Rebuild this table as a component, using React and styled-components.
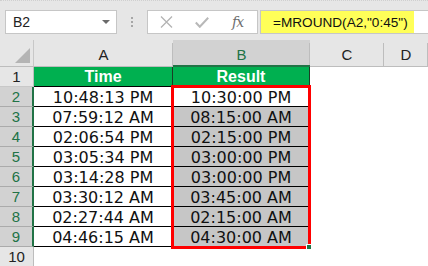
import React from "react";
import styled, { createGlobalStyle } from "styled-components";

const GlobalStyle = createGlobalStyle`
  html, body { margin: 0; padding: 0; background: #ffffff; overflow: hidden; }
  #root { width: 428px; height: 266px; }
`;

const Page = styled.div`
  position: relative;
  width: 428px;
  height: 266px;
  overflow: hidden;
  background: #ffffff;
  font-family: "Liberation Sans", Arial, sans-serif;
`;

const FormulaBar = styled.div`
  display: flex;
  align-items: stretch;
  height: 40px;
  box-sizing: border-box;
  padding: 9px 0 6px 5px;
  background: #e6e6e6;
  border-top: 1px dotted #cfcfcf;
`;

const NameBox = styled.div`
  width: 112px;
  box-sizing: border-box;
  display: flex;
  align-items: center;
  justify-content: space-between;
  padding: 0 6px 0 7px;
  background: #ffffff;
  border: 1px solid #c6c6c6;
  font-size: 14px;
  color: #222;
`;

const DropArrow = styled.span`
  width: 0;
  height: 0;
  border-left: 4px solid transparent;
  border-right: 4px solid transparent;
  border-top: 4px solid #6a6a6a;
`;

const Grip = styled.div`
  width: 30px;
  display: flex;
  flex-direction: column;
  align-items: center;
  justify-content: center;
  gap: 2px;
`;

const GripDot = styled.span`
  width: 2px;
  height: 2px;
  background: #a6a6a6;
`;

const FuncBox = styled.div`
  width: 111px;
  box-sizing: border-box;
  display: flex;
  align-items: center;
  padding-left: 12px;
  gap: 22px;
  background: #ffffff;
  border: 1px solid #c6c6c6;
`;

const Fx = styled.span`
  font-family: "DejaVu Serif", "Liberation Serif", serif;
  font-style: italic;
  font-size: 14px;
  color: #6e6e6e;
  margin-left: 1px;
  letter-spacing: -1px;
`;

const FormulaInput = styled.div`
  flex: 1;
  margin-left: 2px;
  display: flex;
  align-items: stretch;
  background: #ffffff;
  border-top: 1px solid #c6c6c6;
  border-bottom: 1px solid #c6c6c6;
  border-left: 1px solid #c6c6c6;
`;

const Highlight = styled.div`
  width: 153px;
  display: flex;
  align-items: center;
  padding-left: 12px;
  box-sizing: border-box;
  background: #ffff58;
  font-size: 13.6px;
  color: #111;
  white-space: nowrap;
`;

const Sheet = styled.div`
  display: grid;
  grid-template-columns: 34px 139px 137px 74px 44px;
  grid-template-rows: 27px repeat(10, 20px);
`;

const Corner = styled.div`
  position: relative;
  background: #e6e6e6;
  border-right: 1px solid #c8c8c8;
  border-bottom: 1px solid #bdbdbd;
  box-sizing: border-box;
  &::after {
    content: "";
    position: absolute;
    right: 3px;
    bottom: 3px;
    width: 0;
    height: 0;
    border-left: 15px solid transparent;
    border-bottom: 15px solid #b4b4b4;
  }
`;

const ColHeader = styled.div`
  position: relative;
  box-sizing: border-box;
  background: ${(p) => (p.$selected ? "#d2d2d2" : "#e6e6e6")};
  border-bottom: ${(p) => (p.$selected ? "2px solid #217346" : "1px solid #bdbdbd")};
  color: ${(p) => (p.$selected ? "#217346" : "#222")};
  font-size: 15px;
  text-align: center;
  padding-top: 4px;
  line-height: 22px;
  &::after {
    content: "";
    position: absolute;
    right: 0;
    top: 3px;
    bottom: 0;
    width: 1px;
    background: #bdbdbd;
  }
`;

const RowHeader = styled.div`
  box-sizing: border-box;
  background: ${(p) => (p.$selected ? "#d2d2d2" : "#e6e6e6")};
  border-bottom: 1px solid ${(p) => (p.$selected ? "#ababab" : "#c8c8c8")};
  border-right: ${(p) => (p.$selected ? "2px solid #217346" : "1px solid #bdbdbd")};
  color: ${(p) => (p.$selected ? "#217346" : "#222")};
  font-size: 15px;
  text-align: center;
  line-height: 20px;
`;

const TitleCell = styled.div`
  box-sizing: border-box;
  background: #00b050;
  border-right: 1px solid #1c3d25;
  border-bottom: 1px solid #000;
  color: #ffffff;
  font-weight: bold;
  font-size: 16px;
  text-align: center;
  line-height: 20px;
`;

const DataCell = styled.div`
  box-sizing: border-box;
  background: ${(p) => (p.$shaded ? "#c6c6c6" : "#ffffff")};
  border-right: 1px solid #000;
  border-bottom: 1px solid #000;
  font-family: "DejaVu Sans", Verdana, sans-serif;
  font-size: 16px;
  color: #111;
  text-align: center;
  line-height: 19px;
  padding-top: 1px;
  white-space: nowrap;
`;

const EmptyCell = styled.div`
  background: #ffffff;
`;

const Selection = styled.div`
  position: absolute;
  left: 171px;
  top: 85px;
  width: 140px;
  height: 164px;
  box-sizing: border-box;
  border: 3px solid #ff0000;
  pointer-events: none;
`;

const FillHandle = styled.div`
  position: absolute;
  left: 306px;
  top: 244px;
  width: 4px;
  height: 4px;
  background: #217346;
  border-left: 1px solid #fff;
  border-top: 1px solid #fff;
`;

const times = [
  "10:48:13 PM",
  "07:59:12 AM",
  "02:06:54 PM",
  "03:05:34 PM",
  "03:14:28 PM",
  "03:30:12 AM",
  "02:27:44 AM",
  "04:46:15 AM",
];

const results = [
  "10:30:00 PM",
  "08:15:00 AM",
  "02:15:00 PM",
  "03:00:00 PM",
  "03:00:00 PM",
  "03:45:00 AM",
  "02:15:00 AM",
  "04:30:00 AM",
];

const XIcon = () => (
  <svg width="13" height="12" viewBox="0 0 13 12">
    <path d="M1 0.5 L12 11.5 M12 0.5 L1 11.5" stroke="#b3b3b3" strokeWidth="1.3" fill="none" />
  </svg>
);

const CheckIcon = () => (
  <svg width="14" height="11" viewBox="0 0 14 11">
    <path d="M0.8 5.5 L4.8 9.8 L13.2 0.8" stroke="#b8b8b8" strokeWidth="2" fill="none" />
  </svg>
);

export default function App() {
  return (
    <Page>
      <GlobalStyle />
      <FormulaBar>
        <NameBox>
          <span>B2</span>
          <DropArrow />
        </NameBox>
        <Grip>
          <GripDot />
          <GripDot />
          <GripDot />
        </Grip>
        <FuncBox>
          <XIcon />
          <CheckIcon />
          <Fx>fx</Fx>
        </FuncBox>
        <FormulaInput>
          <Highlight>=MROUND(A2,"0:45")</Highlight>
        </FormulaInput>
      </FormulaBar>
      <Sheet>
        <Corner />
        <ColHeader>A</ColHeader>
        <ColHeader $selected>B</ColHeader>
        <ColHeader>C</ColHeader>
        <ColHeader>D</ColHeader>

        <RowHeader>1</RowHeader>
        <TitleCell>Time</TitleCell>
        <TitleCell>Result</TitleCell>
        <EmptyCell />
        <EmptyCell />

        {times.map((t, i) => (
          <React.Fragment key={t + i}>
            <RowHeader $selected>{i + 2}</RowHeader>
            <DataCell>{t}</DataCell>
            <DataCell $shaded={i > 0}>{results[i]}</DataCell>
            <EmptyCell />
            <EmptyCell />
          </React.Fragment>
        ))}

        <RowHeader>10</RowHeader>
        <EmptyCell />
        <EmptyCell />
        <EmptyCell />
        <EmptyCell />
      </Sheet>
      <Selection />
      <FillHandle />
    </Page>
  );
}
